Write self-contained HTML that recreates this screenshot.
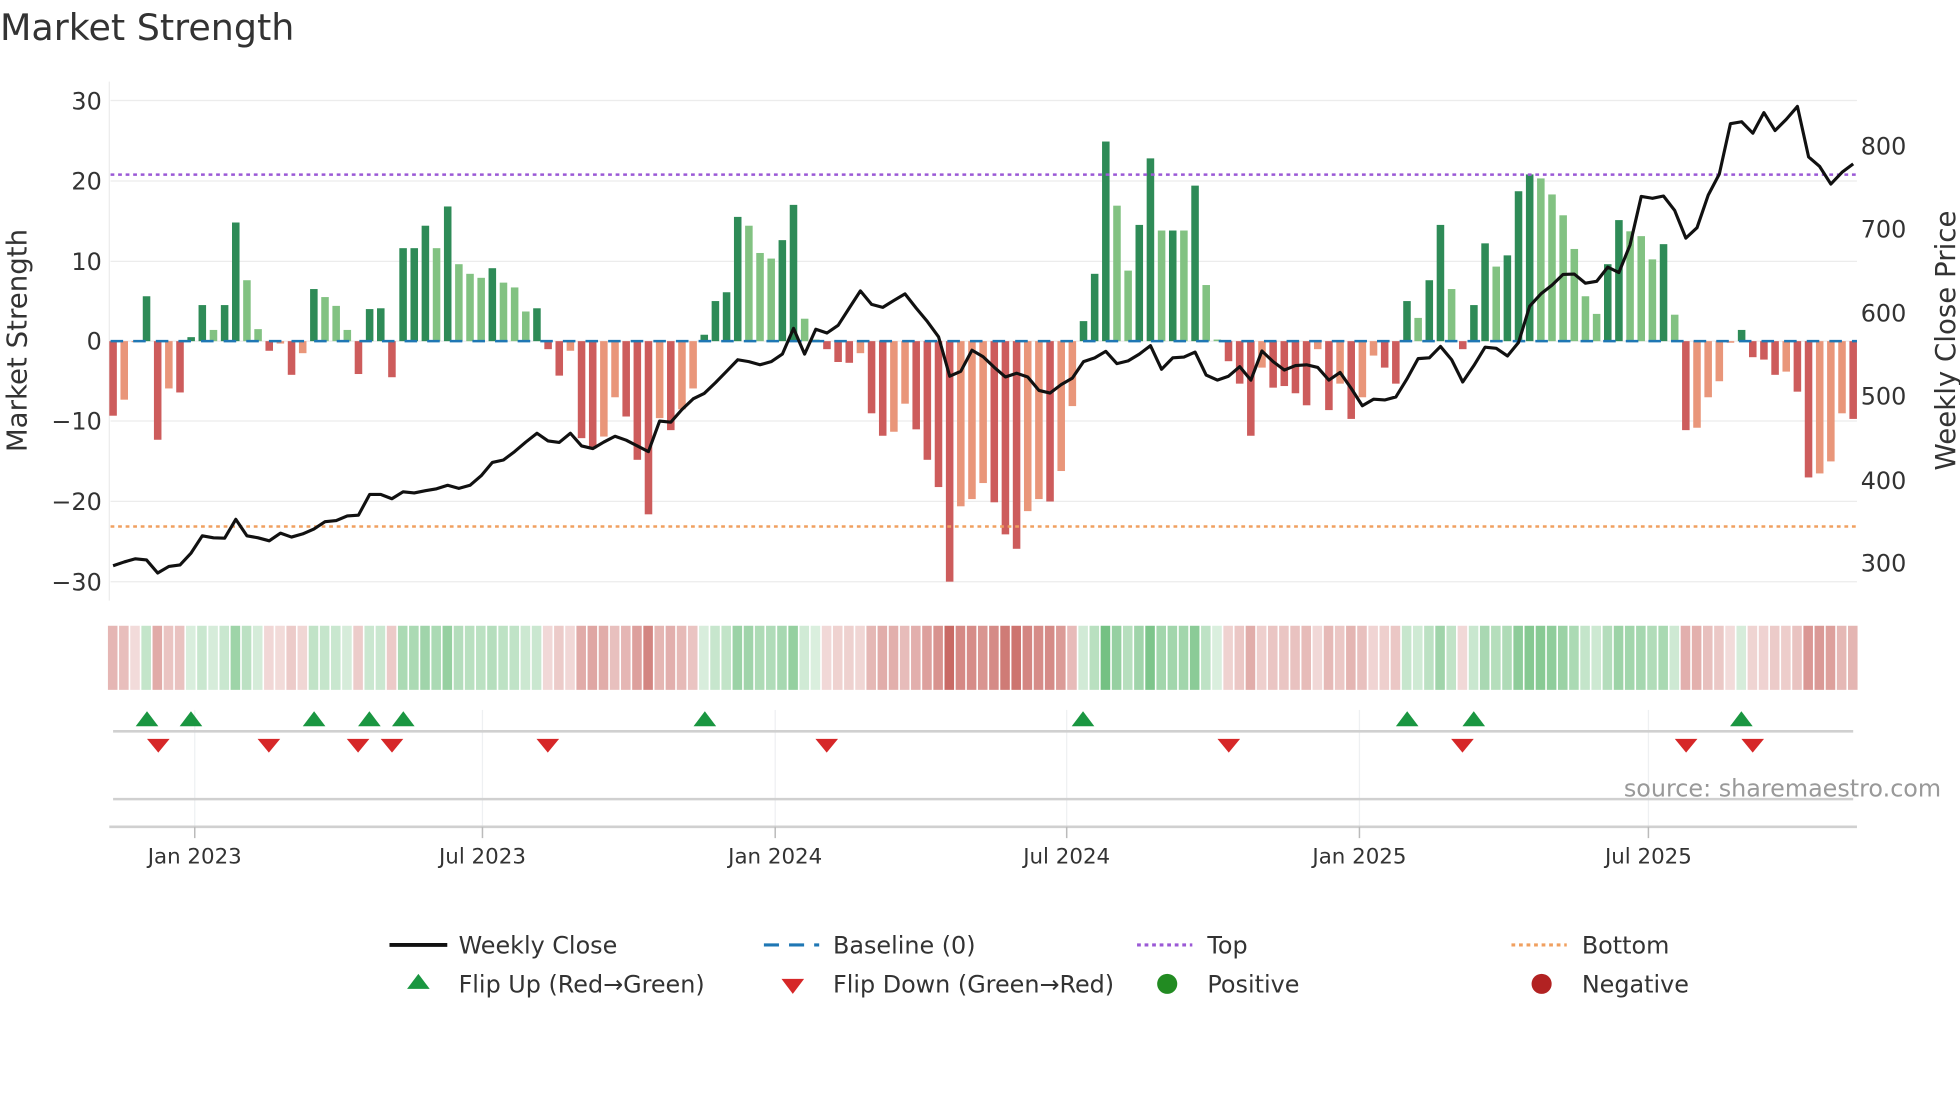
<!DOCTYPE html>
<html><head><meta charset="utf-8">
<style>
html,body{margin:0;padding:0;background:#fff;}
svg{display:block;}
text{font-family:"DejaVu Sans","Liberation Sans",sans-serif;fill:#333;}
</style></head>
<body>
<svg id="s" width="1960" height="1102" viewBox="0 0 1560 877" preserveAspectRatio="none" xmlns="http://www.w3.org/2000/svg">
<rect width="1560" height="877" fill="#fff"/>
<text x="0" y="32" font-size="29">Market Strength</text>
<g stroke="#ececec" stroke-width="1">
<line x1="88" y1="80" x2="1478" y2="80"/><line x1="88" y1="144" x2="1478" y2="144"/>
<line x1="88" y1="208" x2="1478" y2="208"/><line x1="88" y1="271.5" x2="1478" y2="271.5"/>
<line x1="88" y1="335" x2="1478" y2="335"/><line x1="88" y1="399" x2="1478" y2="399"/>
<line x1="88" y1="463" x2="1478" y2="463"/>
<line x1="87" y1="65" x2="87" y2="478"/>
</g>
<g font-size="19" text-anchor="end">
<text x="81" y="87">30</text><text x="81" y="151">20</text><text x="81" y="215">10</text>
<text x="81" y="278">0</text><text x="81" y="342">−10</text><text x="81" y="406">−20</text><text x="81" y="470">−30</text>
</g>
<g font-size="19">
<text x="1481" y="123">800</text><text x="1481" y="189">700</text><text x="1481" y="256">600</text>
<text x="1481" y="322">500</text><text x="1481" y="389">400</text><text x="1481" y="455">300</text>
</g>
<text transform="translate(21,271) rotate(-90)" font-size="22" text-anchor="middle">Market Strength</text>
<text transform="translate(1556,271) rotate(-90)" font-size="22" text-anchor="middle">Weekly Close Price</text>
<g id="bars"></g>
<line x1="88" y1="271.5" x2="1478" y2="271.5" stroke="#1f77b4" stroke-width="2" stroke-dasharray="10,8"/>
<line x1="88" y1="139" x2="1478" y2="139" stroke="#9b59d6" stroke-width="2" stroke-dasharray="3,3"/>
<line x1="88" y1="419" x2="1478" y2="419" stroke="#f0a060" stroke-width="2" stroke-dasharray="3,3"/>
<polyline id="price" fill="none" stroke="#111" stroke-width="2.5" stroke-linejoin="round"/>
<g id="heat"></g>
<g stroke="#eef0f2" stroke-width="1">
<line x1="155" y1="565" x2="155" y2="658"/><line x1="384" y1="565" x2="384" y2="658"/>
<line x1="617" y1="565" x2="617" y2="658"/><line x1="849" y1="565" x2="849" y2="658"/>
<line x1="1082" y1="565" x2="1082" y2="658"/><line x1="1312" y1="565" x2="1312" y2="658"/>
</g>
<line x1="90" y1="582" x2="1475" y2="582" stroke="#d0d0d0" stroke-width="2"/>
<line x1="90" y1="636" x2="1475" y2="636" stroke="#d0d0d0" stroke-width="2"/>
<line x1="87" y1="658" x2="1478" y2="658" stroke="#d0d0d0" stroke-width="2"/>
<g id="marks"></g>
<g stroke="#bbb" stroke-width="1.2">
<line x1="155" y1="658" x2="155" y2="667"/><line x1="384" y1="658" x2="384" y2="667"/>
<line x1="617" y1="658" x2="617" y2="667"/><line x1="849" y1="658" x2="849" y2="667"/>
<line x1="1082" y1="658" x2="1082" y2="667"/><line x1="1312" y1="658" x2="1312" y2="667"/>
</g>
<g font-size="17" text-anchor="middle">
<text x="155" y="687">Jan 2023</text><text x="384" y="687">Jul 2023</text><text x="617" y="687">Jan 2024</text>
<text x="849" y="687">Jul 2024</text><text x="1082" y="687">Jan 2025</text><text x="1312" y="687">Jul 2025</text>
</g>
<text x="1545" y="634" font-size="19" text-anchor="end" style="fill:#999">source: sharemaestro.com</text>
<g font-size="19">
<line x1="310" y1="752" x2="356" y2="752" stroke="#111" stroke-width="3"/>
<text x="365" y="759">Weekly Close</text>
<line x1="608" y1="752" x2="652" y2="752" stroke="#1f77b4" stroke-width="2.5" stroke-dasharray="12,8"/>
<text x="663" y="759">Baseline (0)</text>
<line x1="905" y1="752" x2="949" y2="752" stroke="#9b59d6" stroke-width="2.5" stroke-dasharray="3,3"/>
<text x="961" y="759">Top</text>
<line x1="1203" y1="752" x2="1247" y2="752" stroke="#f0a060" stroke-width="2.5" stroke-dasharray="3,3"/>
<text x="1259" y="759">Bottom</text>
<polygon points="333,775 342,787 324,787" fill="#1a9641"/>
<text x="365" y="790">Flip Up (Red→Green)</text>
<polygon points="622,779 640,779 631,791" fill="#d62728"/>
<text x="663" y="790">Flip Down (Green→Red)</text>
<circle cx="929" cy="783" r="8" fill="#228b22"/>
<text x="961" y="790">Positive</text>
<circle cx="1227" cy="783" r="8" fill="#b22222"/>
<text x="1259" y="790">Negative</text>
</g>
</svg>
<script>
var V=[-9.3,-7.3,-0.1,5.6,-12.3,-5.9,-6.4,0.5,4.5,1.4,4.5,14.8,7.6,1.5,-1.2,-0.3,-4.2,-1.5,6.5,5.5,4.4,1.4,-4.1,4.0,4.1,-4.5,11.6,11.6,14.4,11.6,16.8,9.6,8.4,7.9,9.1,7.3,6.7,3.7,4.1,-1.0,-4.3,-1.2,-12.1,-13.4,-11.9,-7.0,-9.4,-14.8,-21.6,-9.6,-11.1,-8.5,-5.9,0.8,5.0,6.1,15.5,14.4,11.0,10.3,12.6,17.0,2.8,0.2,-1.0,-2.6,-2.7,-1.5,-9.0,-11.8,-11.3,-7.8,-11.0,-14.8,-18.2,-30.0,-20.6,-19.7,-17.7,-20.1,-24.1,-25.9,-21.2,-19.7,-20.0,-16.2,-8.1,2.5,8.4,24.9,16.9,8.8,14.5,22.8,13.8,13.8,13.8,19.4,7.0,0.2,-2.5,-5.3,-11.8,-3.3,-5.8,-5.6,-6.5,-8.0,-1.0,-8.6,-5.3,-9.7,-7.0,-1.8,-3.3,-5.3,5.0,2.9,7.6,14.5,6.5,-1.0,4.5,12.2,9.3,10.7,18.7,20.8,20.3,18.3,15.7,11.5,5.6,3.4,9.6,15.1,13.7,13.1,10.2,12.1,3.3,-11.1,-10.8,-7.0,-5.0,-0.2,1.4,-2.0,-2.3,-4.2,-3.8,-6.3,-17.0,-16.5,-15.0,-9.0,-9.7];
var C="RSSDRSRDDLDDLLRSRSDLLLRDDRDDDLDLLLDLLLDRRSRRSSRRRSRSSDDDDLLLDDLLRRRSRRSSRRRRSSSRRRSSRSSDDDLLDDLDLDLLRRRSRRRRSRSRSSRRDLDDLRDDLDDDLLLLLLDDLLLDLRSSSSDRRRSRRSSSR";
var P=[1478,1468,1460,1463,1497,1480,1476,1445,1400,1405,1406,1357,1400,1405,1413,1393,1403,1395,1382,1363,1360,1348,1346,1292,1292,1303,1285,1288,1282,1277,1268,1276,1268,1243,1208,1202,1180,1155,1132,1152,1156,1132,1165,1172,1155,1140,1150,1165,1180,1100,1103,1070,1042,1028,1000,970,940,945,953,945,925,858,925,860,870,850,805,760,795,803,785,768,805,840,880,983,970,915,932,960,985,975,985,1020,1027,1005,988,945,935,918,950,943,925,903,965,935,933,920,980,993,983,958,993,917,945,967,955,953,960,993,973,1015,1060,1043,1045,1037,990,937,935,905,940,998,955,907,910,930,895,800,768,745,717,716,740,735,698,712,640,513,518,512,550,622,595,510,455,323,318,348,294,341,312,278,410,435,481,450,428];
var NS="http://www.w3.org/2000/svg";
function el(t,a,p){var e=document.createElementNS(NS,t);for(var k in a)e.setAttribute(k,a[k]);p.appendChild(e);return e;}
var bars=document.getElementById('bars'),heat=document.getElementById('heat'),marks=document.getElementById('marks');
var col={D:'#2e8b57',L:'#82c282',R:'#cd5c5c',S:'#e9967a'};
var pts=[];
for(var i=0;i<V.length;i++){
 var x=90+8.878*i,v=V[i],y0=271.5,y1=271.5-v*6.38;
 var c=C[i]||(v>=0?'D':'R');
 el('rect',{x:x-3,y:Math.min(y0,y1),width:6,height:Math.max(0.8,Math.abs(y1-y0)),fill:col[c]},bars);
 var a=Math.min(0.85,0.2+Math.abs(v)/26*0.6);
 el('rect',{x:x-4.1,y:498,width:7.6,height:51,fill:v>=0?'#4caf5f':'#c0504a','fill-opacity':a},heat);
 pts.push(x.toFixed(1)+','+(P[i]*0.3046).toFixed(1));
}
document.getElementById('price').setAttribute('points',pts.join(' '));
[117,152,250,294,321,561,862,1120,1173,1386].forEach(function(x){el('polygon',{points:(x)+',566 '+(x+9)+',578 '+(x-9)+',578',fill:'#1a9641'},marks);});
[126,214,285,312,436,658,978,1164,1342,1395].forEach(function(x){el('polygon',{points:(x-9)+',588 '+(x+9)+',588 '+x+',599',fill:'#d62728'},marks);});
</script>
</body></html>
